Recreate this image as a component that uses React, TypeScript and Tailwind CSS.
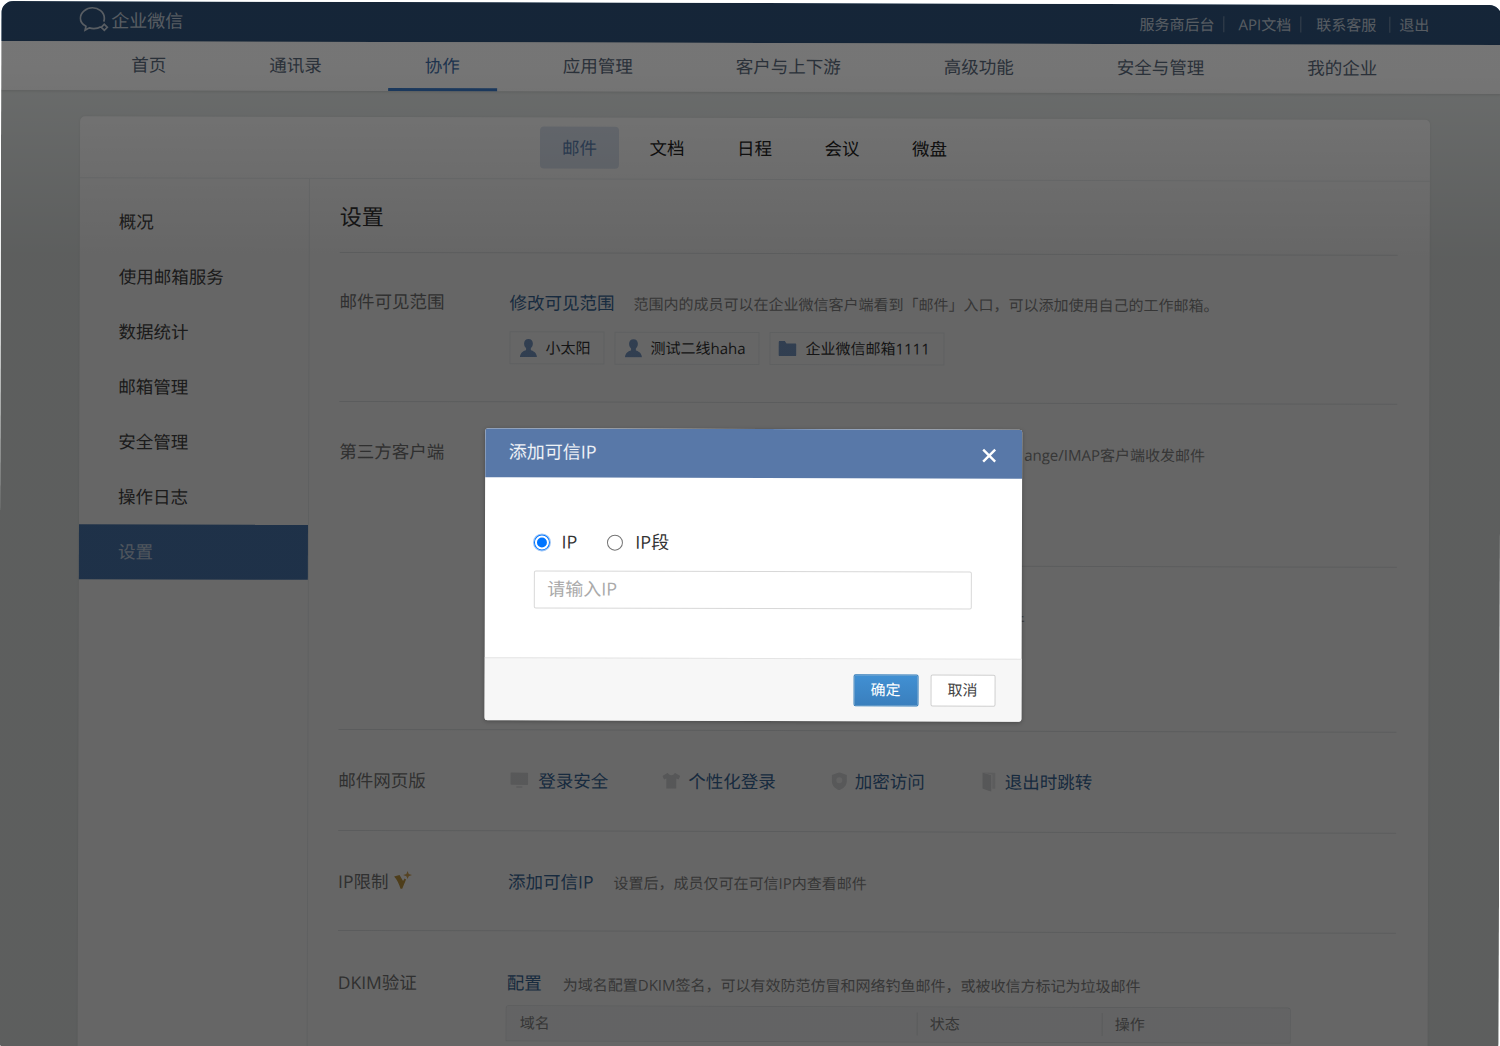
const FONT = "font-['Open_Sans','Noto_Sans_CJK_SC',sans-serif]";

function Person() {
  return (
    <svg width="18" height="19" viewBox="0 0 18 19" className="shrink-0">
      <path d="M9 0.5c-2.8 0-4.4 2-4.4 4.6 0 1.9.8 3.6 2 4.6v1.9C4.6 12.7 1 13.6.5 18.5h17c-.5-4.9-4.1-5.800-6.100-6.900V9.700c1.200-1 2-2.700 2-4.600C13.400 2.500 11.800.5 9 .5z" fill="#7b9cc9" />
    </svg>
  );
}

function Folder() {
  return (
    <svg width="18" height="15" viewBox="0 0 18 15" className="shrink-0">
      <path d="M0 1.500C0 .7.500 0 1.300 0h5l1.700 2.300h8.700c.7 0 1.300.6 1.300 1.300V14c0 .6-.5 1-1.100 1H1c-.6 0-1-.4-1-1z" fill="#7b9cc9" />
    </svg>
  );
}

function Monitor() {
  return (
    <svg width="18" height="16" viewBox="0 0 18 16">
      <rect x="0" y="0" width="18" height="12.500" rx="1" fill="#dcdddf" />
      <rect x="6" y="13.500" width="6" height="2" fill="#e8e9ea" />
    </svg>
  );
}

function Shirt() {
  return (
    <svg width="18" height="16" viewBox="0 0 18 16">
      <path d="M5.500 0 0 3.200l1.800 3.500 2.200-1V16h10V5.700l2.200 1L18 3.200 12.500 0C12 1.600 10.700 2.400 9 2.400S6 1.600 5.500 0z" fill="#d8d9db" />
    </svg>
  );
}

function Shield() {
  return (
    <svg width="16" height="18" viewBox="0 0 16 18">
      <path d="M8 0 15.500 2.800V9c0 4.500-3.600 7.500-7.500 9C4.100 16.500.5 13.500.5 9V2.800z" fill="#dcdddf" />
      <circle cx="8" cy="8" r="3" fill="#f4f4f5" />
    </svg>
  );
}

function DoorIcon() {
  return (
    <svg width="14" height="20" viewBox="0 0 14 20">
      <path d="M0 1h13v16H10V3z" fill="#e6e7e8" />
      <path d="M0 1 9 3.500V20L0 17z" fill="#d8d9db" />
    </svg>
  );
}

function WebItem({ icon, label, iconWidth }: { icon: React.ReactNode; label: string; iconWidth: string }) {
  return (
    <div className="flex items-center">
      <span className={`flex justify-center ${iconWidth}`}>{icon}</span>
      <span className="text-[17.500px] text-[#3a6a9c]">{label}</span>
    </div>
  );
}

const sideItems = ["概况", "使用邮箱服务", "数据统计", "邮箱管理", "安全管理", "操作日志", "设置"];
const navItems = ["首页", "通讯录", "协作", "应用管理", "客户与上下游", "高级功能", "安全与管理", "我的企业"];
const tabs = ["邮件", "文档", "日程", "会议", "微盘"];

export default function App() {
  return (
    <div className={`h-[1046px] w-[1500px] overflow-hidden bg-white ${FONT}`}>
      <div className="relative mt-[3px] h-[1050px] w-[1500px] origin-[750px_520px] rotate-[0.153deg] overflow-hidden rounded-[12px] bg-[#e8eceb]">
        <header className="flex h-10 items-center justify-between bg-[#2e5179] pl-[78px] pr-[72px]">
          <div className="flex items-center gap-[2px] pb-[2px] text-white/70">
            <svg width="30" height="28" viewBox="0 0 30 28" fill="none" stroke="white" strokeOpacity="0.7" strokeWidth="1.700">
              <path d="M21.500 20.500C19.600 21.700 17 22.300 14.500 22.300c-1.600 0-3-.2-4.400-.7l-4.300 2.300.8-3.800C3.100 18.200 1 15.200 1 12 1 6.200 7 1.500 13 1.500s12 4 12 10.500c0 1.300-.2 2.300-.6 3.300" />
              <path d="M25 18l3 3-3 3-3-3z" />
            </svg>
            <span className="text-[18px]">企业微信</span>
          </div>
          <div className="flex items-center text-[15px] text-white/70">
            <span>服务商后台</span>
            <span className="ml-[9px] mr-[14px] h-[16px] w-px bg-white/35" />
            <span>API文档</span>
            <span className="ml-[9px] mr-[15px] h-[16px] w-px bg-white/35" />
            <span>联系客服</span>
            <span className="ml-[13px] mr-[9px] h-[16px] w-px bg-white/35" />
            <span>退出</span>
          </div>
        </header>

        <nav className="flex h-[49px] items-stretch gap-[29px] bg-white pl-[93px] shadow-[0_1px_3px_rgba(0,0,0,0.12)]">
          {navItems.map((item, i) => (
            <div
              key={item}
              className={
                i === 2
                  ? "flex items-center border-b-[3px] border-[#3b7ccb] px-[37px] pt-[1px] text-[17.500px] text-[#3f6ea8]"
                  : "flex items-center border-b-[3px] border-transparent px-[37px] pt-[1px] text-[17.500px] text-[#5b6a7c]"
              }
            >
              {item}
            </div>
          ))}
        </nav>

        <main className="ml-[79px] mt-[26px] h-[930px] w-[1350px] rounded-t-[5px] bg-white shadow-[0_0_3px_rgba(0,0,0,0.08)]">
          <div className="flex h-[62px] items-start justify-center gap-[8.500px] border-b border-[#eceff1] pr-[1px] pt-[9px]">
            {tabs.map((tab, i) => (
              <div
                key={tab}
                className={
                  i === 0
                    ? "flex h-[42px] items-center rounded-[4px] bg-[#dce4f0] px-[22px] text-[17.500px] text-[#5f83b3]"
                    : "flex h-[42px] items-center rounded-[4px] px-[22px] text-[17.500px] text-[#222222]"
                }
              >
                {tab}
              </div>
            ))}
          </div>

          <div className="flex">
            <aside className="h-[868px] w-[230px] shrink-0 border-r border-[#eceff1] pt-[16px]">
              {sideItems.map((item, i) => (
                <div
                  key={item}
                  className={
                    i === 6
                      ? "flex h-[55px] items-center bg-[#4c7bb5] pb-[1px] pl-[39px] text-[17.500px] text-white/70"
                      : "flex h-[55px] items-center pb-[1px] pl-[39px] text-[17.500px] text-[#444444]"
                  }
                >
                  {item}
                </div>
              ))}
            </aside>

            <section className="min-w-0 flex-1 pl-[30px] pr-[32px]">
              <div className="flex h-[74px] items-center border-b border-[#e3e6e8] pt-[2px] text-[22px] text-[#333333]">设置</div>

              <div className="h-[149px] border-b border-[#e3e6e8] pt-[37px]">
                <div className="flex h-[24px] items-center">
                  <div className="w-[170px] pb-[1px] text-[17.500px] text-[#777777]">邮件可见范围</div>
                  <div className="text-[17.500px] text-[#3a6a9c]">修改可见范围</div>
                  <div className="ml-[19px] pt-[2px] text-[15px] text-[#888888]">范围内的成员可以在企业微信客户端看到「邮件」入口，可以添加使用自己的工作邮箱。</div>
                </div>
                <div className="ml-[170px] mt-[17px] flex gap-[10px]">
                  <div className="flex h-[33px] w-[95px] items-center gap-[8px] border border-[#eceff1] pl-[9px] text-[15px] text-[#333333]">
                    <Person />小太阳
                  </div>
                  <div className="flex h-[33px] w-[145px] items-center gap-[8px] border border-[#eceff1] pl-[9px] text-[15px] text-[#333333]">
                    <Person />测试二线haha
                  </div>
                  <div className="flex h-[33px] w-[175px] items-center gap-[9px] border border-[#eceff1] pl-[8px] text-[15px] text-[#333333]">
                    <Folder />企业微信邮箱1111
                  </div>
                </div>
              </div>

              <div className="h-[328px] border-b border-[#e3e6e8] pt-[35px]">
                <div className="flex items-center">
                  <div className="w-[170px] text-[17.500px] text-[#777777]">第三方客户端</div>
                  <div className="ml-[515px] pt-[5px] text-[15px] text-[#888888]">ange/IMAP客户端收发邮件</div>
                </div>
                <div className="ml-[680px] mt-[99px] h-px bg-[#e3e6e8]" />
                <div className="ml-[671px] mt-[43px] text-[15px] leading-[20px] text-[#888888]">件</div>
              </div>

              <div className="flex h-[101px] items-start border-b border-[#e3e6e8] pt-[37px]">
                <div className="w-[168px] text-[17.500px] leading-[26px] text-[#777777]">邮件网页版</div>
                <div className="flex items-center">
                  <WebItem icon={<Monitor />} label="登录安全" iconWidth="w-[32px] pr-[6px]" />
                  <div className="w-[54px]" />
                  <WebItem icon={<Shirt />} label="个性化登录" iconWidth="w-[26px] pr-[8px]" />
                  <div className="w-[53px]" />
                  <WebItem icon={<Shield />} label="加密访问" iconWidth="w-[26px] pr-[6px]" />
                  <div className="w-[54px]" />
                  <WebItem icon={<DoorIcon />} label="退出时跳转" iconWidth="w-[26px] pr-[6px]" />
                </div>
              </div>

              <div className="flex h-[100px] items-center border-b border-[#e3e6e8] pt-[2px]">
                <div className="flex w-[170px] items-center gap-[6px] text-[17.500px] text-[#777777]">
                  IP限制
                  <svg width="18" height="18" viewBox="0 0 18 18" className="mb-[3px]">
                    <path d="M0 5.500 5.500 4 9 10 10.500 7.500 12 8.500 8.200 17.800 6.500 17.800C5 13 3 8.500 0 5.500z" fill="#c39a43" />
                    <path d="M13.500 0l1.200 2.800 3.300 1.200-3.300 1.200-1.200 2.800-1.200-2.800-3.300-1.200 3.300-1.200z" fill="#d8a95a" />
                  </svg>
                </div>
                <div className="text-[17.500px] text-[#3a6a9c]">添加可信IP</div>
                <div className="ml-[20px] pt-[2px] text-[15px] text-[#888888]">设置后，成员仅可在可信IP内查看邮件</div>
              </div>

              <div className="pt-[38px]">
                <div className="flex items-center">
                  <div className="w-[169px] text-[17.500px] text-[#777777]">DKIM验证</div>
                  <div className="text-[17.500px] text-[#3a6a9c]">配置</div>
                  <div className="ml-[21px] pt-[4px] text-[15px] text-[#888888]">为域名配置DKIM签名，可以有效防范仿冒和网络钓鱼邮件，或被收信方标记为垃圾邮件</div>
                </div>
                <div className="ml-[168px] mt-[9px] w-[785px] rounded-t-[3px] border border-[#e3e6e8]">
                  <div className="flex h-[34px] items-center bg-[#f7f8f9] text-[15px] text-[#888888]">
                    <div className="w-[411px] border-r border-[#dfe2e4] pl-[13px]">域名</div>
                    <div className="w-[185px] border-r border-[#dfe2e4] pl-[12px]">状态</div>
                    <div className="pl-[12px]">操作</div>
                  </div>
                </div>
              </div>
            </section>
          </div>
        </main>

        <div className="absolute inset-0 bg-gradient-to-b from-black/[0.54] from-[6%] via-black/60 via-[24%] to-black/60" />

        <div className="absolute left-[484.500px] top-[426px] w-[537px] overflow-hidden rounded-[3px] bg-white shadow-[0_1px_4px_rgba(0,0,0,0.3)]">
          <div className="flex h-[49px] items-center justify-between bg-[#5878a8] pl-[24px] pr-[25px]">
            <span className="pb-[3px] text-[18px] text-white/90">添加可信IP</span>
            <svg width="16" height="16" viewBox="0 0 16 16" stroke="white" strokeWidth="2.400" className="mt-[3px]">
              <path d="M2 2l12 12M14 2 2 14" />
            </svg>
          </div>
          <div className="h-[180px] pl-[49px] pt-[51px]">
            <div className="flex h-[28px] items-center text-[18px] text-[#333333]">
              <span className="flex size-[16px] items-center justify-center rounded-full border border-[#0075ff] ring-1 ring-[#9ec5f5]">
                <span className="size-[10px] rounded-full bg-[#0075ff]" />
              </span>
              <span className="ml-[12px] pb-[2px]">IP</span>
              <span className="ml-[30px] size-[16px] rounded-full border border-[#767676]" />
              <span className="ml-[12px] pb-[2px]">IP段</span>
            </div>
            <div className="mt-[14px] flex h-[38px] w-[438px] items-center rounded-[2px] border border-[#d8d8d8] pb-[2px] pl-[13px] text-[18px] text-[#aaaaaa]">请输入IP</div>
          </div>
          <div className="flex h-[63px] items-center justify-end gap-[12px] border-t border-[#e4e4e4] bg-[#f7f7f7] pr-[26px]">
            <button className="flex h-[32px] w-[65px] items-center justify-center rounded-[2px] border border-[#2f7ab8] bg-gradient-to-b from-[#4190d3] to-[#3a7fbd] pb-[1px] text-[15px] text-white">确定</button>
            <button className="flex h-[32px] w-[65px] items-center justify-center rounded-[2px] border border-[#cfcfcf] bg-white pb-[1px] text-[15px] text-[#444444]">取消</button>
          </div>
        </div>
      </div>
    </div>
  );
}
